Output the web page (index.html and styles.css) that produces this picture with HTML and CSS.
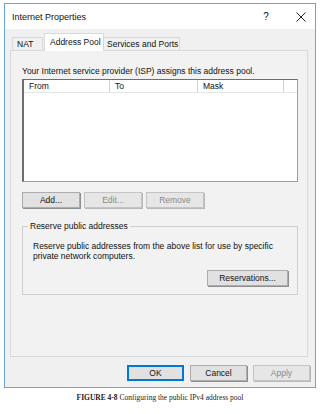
FILE: index.html
```html
<!DOCTYPE html>
<html>
<head>
<meta charset="utf-8">
<link rel="stylesheet" href="styles.css">
</head>
<body>
<div class="window">
  <div class="titlebar">
    <span class="title">Internet Properties</span>
    <span class="help">?</span>
    <span class="close">
      <svg width="10" height="10" viewBox="0 0 10 10"><path d="M0.5 0.5 L9.5 9.5 M9.5 0.5 L0.5 9.5" stroke="#222" stroke-width="1"/></svg>
    </span>
  </div>
  <div class="body">
    <div class="tabs">
      <div class="tab tab-nat">NAT</div>
      <div class="tab tab-active">Address Pool</div>
      <div class="tab tab-services">Services and Ports</div>
    </div>
    <div class="panel">
      <p class="intro">Your Internet service provider (ISP) assigns this address pool.</p>
      <div class="list">
        <div class="list-header">
          <div class="col col-from">From</div>
          <div class="col col-to">To</div>
          <div class="col col-mask">Mask</div>
          <div class="col col-rest"></div>
        </div>
      </div>
      <div class="list-buttons">
        <button class="btn">Add...</button>
        <button class="btn btn-disabled">Edit...</button>
        <button class="btn btn-disabled">Remove</button>
      </div>
      <fieldset class="group">
        <legend class="group-label">Reserve public addresses</legend>
        <p class="group-text">Reserve public addresses from the above list for use by specific private network computers.</p>
        <div class="group-actions">
          <button class="btn btn-res">Reservations...</button>
        </div>
      </fieldset>
    </div>
    <div class="footer">
      <button class="btn btn-ok">OK</button>
      <button class="btn">Cancel</button>
      <button class="btn btn-disabled">Apply</button>
    </div>
  </div>
</div>
<p class="caption"><b>FIGURE 4-8</b> Configuring the public IPv4 address pool</p>
</body>
</html>
```
FILE: styles.css
```css
* { box-sizing: border-box; }
html, body { margin: 0; padding: 0; background: #fff; }
body {
  font-family: "Liberation Sans", Arial, sans-serif;
  font-size: 8.5px;
  color: #111;
  width: 320px;
  height: 414px;
  overflow: hidden;
}
.window {
  margin: 3px 0 0 4px;
  width: 312px;
  height: 385px;
  border: 1px solid #6aa6da;
  background: #f0f0f0;
  display: flex;
  flex-direction: column;
}
.titlebar {
  height: 25px;
  background: #fff;
  display: flex;
  align-items: center;
  padding-left: 7px;
}
.title { font-size: 9px; flex: 1; }
.help { width: 20px; text-align: center; font-size: 10px; margin-right: 15px; }
.close { width: 20px; display: flex; justify-content: center; margin-right: 4px; }
.body {
  flex: 1;
  padding: 0 7px 0 5px;
  display: flex;
  flex-direction: column;
}
.tabs {
  height: 21px;
  display: flex;
  align-items: flex-end;
  padding-left: 2px;
  position: relative;
  z-index: 1;
}
.tab {
  height: 13px;
  border: 1px solid #d9d9d9;
  border-bottom: none;
  background: #f0f0f0;
  display: flex;
  align-items: center;
  font-size: 8.5px;
}
.tab-nat { width: 31px; padding-left: 4px; margin-right: 1px; }
.tab-active {
  width: 60px;
  height: 18px;
  margin-bottom: -1px;
  background: #fff;
  padding-left: 5px;
  padding-bottom: 2px;
  border-color: #d9d9d9;
}
.tab-services { width: 76px; padding-left: 3px; border-left: none; }
.panel {
  height: 307px;
  border: 1px solid #d9d9d9;
  background: #f2f2f2;
  padding: 16px 10px 0 11px;
}
.intro { margin: 0 0 3px 0; line-height: 9px; }
.list {
  height: 103px;
  width: 276px;
  background: #fff;
  border: 1px solid #a0a0a0;
  border-left-color: #6e6e6e;
  border-top-color: #6e6e6e;
  border-left-width: 2px;
}
.list-header {
  height: 13px;
  display: flex;
  border-bottom: 1px solid #e5e5e5;
}
.col {
  border-right: 1px solid #cfcfcf;
  padding-left: 5px;
  display: flex;
  align-items: center;
}
.col-from { width: 86px; }
.col-to { width: 88px; }
.col-mask { width: 86px; }
.col-rest { flex: 1; border-right: none; }
.list-buttons {
  display: flex;
  gap: 4px;
  margin-top: 10px;
}
.btn {
  font-family: inherit;
  font-size: 8.5px;
  color: #111;
  height: 16px;
  width: 58px;
  padding: 0;
  background: #e1e1e1;
  border: 1px solid #adadad;
  box-shadow: 1px 1px 0 #8f8f8f;
}
.btn-disabled {
  color: #8a8a8a;
  background: #e6e6e6;
  border-color: #c4c4c4;
  box-shadow: 1px 1px 0 #b8b8b8;
}
.group {
  margin: 14px 0 0 0;
  padding: 10px 9px 0 10px;
  width: 276px;
  height: 73px;
  border: 1px solid #cfcfcf;
}
.group-label {
  padding: 0 2px;
  margin-left: -5px;
  font-size: 8.5px;
  line-height: 9px;
}
.group-text { margin: 0; line-height: 10px; width: 240px; }
.group-actions { display: flex; justify-content: flex-end; margin-top: 9px; }
.btn-res { width: 81px; }
.footer {
  display: flex;
  justify-content: flex-end;
  gap: 6px;
  padding-top: 8px;
  margin-right: -2px;
}
.footer .btn { width: 57px; }
.btn-ok {
  border: 2px solid #0078d7;
  box-shadow: none;
}
.caption {
  margin: 5px 0 0 0;
  text-align: center;
  font-family: "Liberation Serif", "Times New Roman", serif;
  font-size: 7.5px;
  color: #222;
}
```
